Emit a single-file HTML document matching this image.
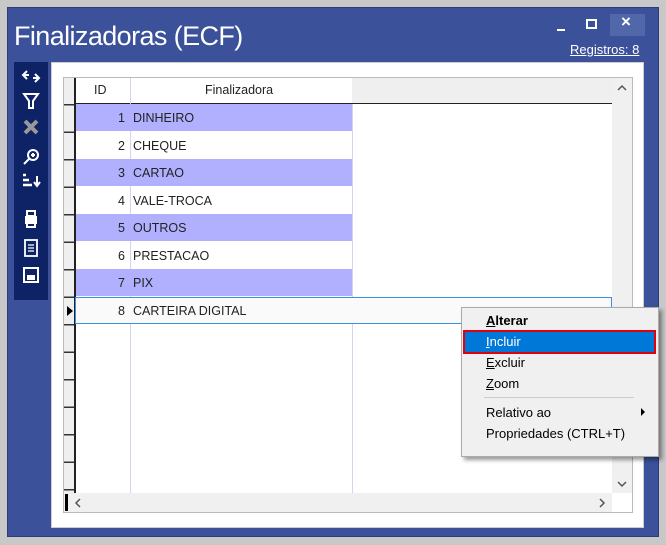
<!DOCTYPE html><html><head><style>
*{margin:0;padding:0;box-sizing:border-box}
body{width:666px;height:545px;background:#c8c8c8;position:relative;overflow:hidden;font-family:"Liberation Sans",sans-serif}
.a{position:absolute}
.win{left:7px;top:7px;width:652px;height:530px;background:#3b5199;border:1px solid #2a3c7a}
.t{left:14px;top:21px;color:#fff;font-size:27px;letter-spacing:-0.6px;font-weight:normal}
.reg{left:570px;top:42px;color:#fff;font-size:13px;text-decoration:underline}
.cell{position:absolute;font-size:12.5px;color:#222}
.mi{position:absolute;left:486px;font-size:13px;color:#000}
</style></head><body>
<div class="a win"></div>
<div class="a t">Finalizadoras (ECF)</div>
<div class="a" style="left:610px;top:14px;width:35px;height:22px;background:#5068aa"></div>
<div class="a" style="left:557px;top:29px;width:8px;height:2px;background:#fff"></div>
<div class="a" style="left:586px;top:19px;width:11px;height:10px;border:2px solid #fff"></div>
<div class="a" style="left:621px;top:12px;color:#fff;font-size:17px;font-weight:bold">×</div>
<div class="a reg">Registros: 8</div>
<div class="a" style="left:14px;top:62px;width:34px;height:238px;background:#0e2366"></div>
<svg class="a" style="left:14px;top:62px" width="34" height="238" fill="none" stroke="#fff" stroke-width="2">
<path d="M13 9 L9 13 L13 17 M9 13 H15 M21 12 L25 16 L21 20 M25 16 H19"/>
<path d="M10 32 H24 L19 39 V46 H15 V39 Z"/>
<path d="M11 59 L23 71 M23 59 L11 71" stroke="#999" stroke-width="4"/>
<circle cx="19" cy="93" r="5"/><path d="M15 97 L10 102 M17 93 H21 M19 91 V95" stroke-width="2"/>
<path d="M9 113 H12 M9 118 H15 M9 123 H18" stroke-width="2.5"/><path d="M23 114 V123 M20 120 L23 124 L26 120"/>
<rect x="11" y="154" width="12" height="8" fill="#fff" stroke="none"/><rect x="13" y="149" width="8" height="5"/><rect x="13" y="161" width="8" height="4" fill="#0e2366"/>
<rect x="11" y="178" width="12" height="16" stroke-width="1.8"/><path d="M14 183 H20 M14 186 H20 M14 189 H20" stroke-width="1.3"/>
<rect x="10" y="206" width="14" height="14" stroke-width="2"/><rect x="13" y="213" width="8" height="5" fill="#fff" stroke="none"/>
</svg>
<div class="a" style="left:51px;top:62px;width:593px;height:466px;background:#fff;border:1px solid #ccc"></div>
<div class="a" style="left:63px;top:77px;width:570px;height:436px;border:1px solid #bbb;background:#fff"></div>
<div class="a" style="left:64px;top:78px;width:11px;height:434px;background:repeating-linear-gradient(#efefef 0 26px,#333 26px 27.5px)"></div>
<div class="a" style="left:74px;top:78px;width:2px;height:434px;background:#222"></div>
<div class="a" style="left:76px;top:78px;width:536px;height:25px;background:#efefef"></div>
<div class="a" style="left:76px;top:78px;width:276px;height:25px;background:#fff"></div>
<div class="a" style="left:76px;top:103px;width:536px;height:1px;background:#222"></div>
<div class="cell" style="left:94px;top:83px">ID</div>
<div class="cell" style="left:205px;top:83px">Finalizadora</div>
<div class="a" style="left:130px;top:78px;width:1px;height:415px;background:#d4d4ee"></div>
<div class="a" style="left:352px;top:104px;width:1px;height:389px;background:#d4d4ee"></div>
<div class="a" style="left:76px;top:104px;width:276px;height:27px;background:#b0b0ff"></div>
<div class="a" style="left:76px;top:159px;width:276px;height:27px;background:#b0b0ff"></div>
<div class="a" style="left:76px;top:214px;width:276px;height:27px;background:#b0b0ff"></div>
<div class="a" style="left:76px;top:269px;width:276px;height:27px;background:#b0b0ff"></div>
<div class="a" style="left:75px;top:297px;width:537px;height:27px;border:1px solid #3c8ee0;background:#fafafa"></div>
<div class="a" style="left:67px;top:306px;width:0;height:0;border-left:6px solid #000;border-top:5px solid transparent;border-bottom:5px solid transparent"></div>
<div class="cell" style="left:118px;top:111px">1</div><div class="cell" style="left:133px;top:111px">DINHEIRO</div>
<div class="cell" style="left:118px;top:139px">2</div><div class="cell" style="left:133px;top:139px">CHEQUE</div>
<div class="cell" style="left:118px;top:166px">3</div><div class="cell" style="left:133px;top:166px">CARTAO</div>
<div class="cell" style="left:118px;top:194px">4</div><div class="cell" style="left:133px;top:194px">VALE-TROCA</div>
<div class="cell" style="left:118px;top:221px">5</div><div class="cell" style="left:133px;top:221px">OUTROS</div>
<div class="cell" style="left:118px;top:249px">6</div><div class="cell" style="left:133px;top:249px">PRESTACAO</div>
<div class="cell" style="left:118px;top:276px">7</div><div class="cell" style="left:133px;top:276px">PIX</div>
<div class="cell" style="left:118px;top:304px">8</div><div class="cell" style="left:133px;top:304px">CARTEIRA DIGITAL</div>
<div class="a" style="left:612px;top:78px;width:20px;height:415px;background:#f0f0f0"></div>
<svg class="a" style="left:612px;top:78px" width="20" height="415" fill="none" stroke="#555" stroke-width="1.5"><path d="M6 12 L10 8 L14 12 M6 404 L10 408 L14 404"/></svg>
<div class="a" style="left:64px;top:493px;width:548px;height:19px;background:#f0f0f0"></div>
<div class="a" style="left:65px;top:494px;width:3px;height:17px;background:#000"></div>
<svg class="a" style="left:64px;top:493px" width="548" height="19" fill="none" stroke="#555" stroke-width="1.5"><path d="M16 6 L12 10 L16 14 M536 6 L540 10 L536 14"/></svg>
<div class="a" style="left:461px;top:307px;width:198px;height:150px;background:#f0f0f0;border:1px solid #aaa;box-shadow:3px 3px 4px rgba(0,0,0,.4)"></div>
<div class="a" style="left:463px;top:330px;width:193px;height:24px;background:#0078d7;border:2px solid #e00010"></div>
<div class="mi" style="top:313px;font-weight:bold"><u>A</u>lterar</div>
<div class="mi" style="top:334px;color:#fff"><u>I</u>ncluir</div>
<div class="mi" style="top:355px"><u>E</u>xcluir</div>
<div class="mi" style="top:376px"><u>Z</u>oom</div>
<div class="a" style="left:484px;top:397px;width:150px;height:1px;background:#ccc"></div>
<div class="mi" style="top:405px">Relativo ao</div>
<div class="a" style="left:641px;top:408px;border-left:4px solid #000;border-top:4px solid transparent;border-bottom:4px solid transparent"></div>
<div class="mi" style="top:426px">Propriedades (CTRL+T)</div>
</body></html>
